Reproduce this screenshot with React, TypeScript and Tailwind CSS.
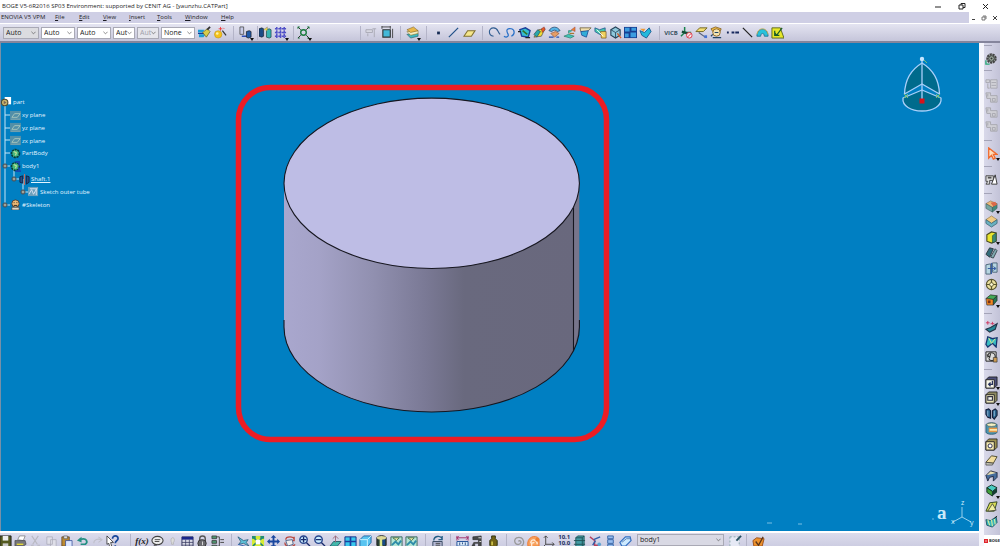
import type { ReactNode } from "react";

const icons: Record<string, ReactNode> = {
  brush: (<><path d="M0 4h7l-2 3H0zM1 9h7l-2 3H1z" fill="#1c9fd8" /><path d="M0 8h8" stroke="#123c9a" strokeWidth="1.3" /><path d="M5 7l5-4 3 3-4 6z" fill="#d8cc4a" stroke="#54511c" strokeWidth=".7" /><path d="M10 4l3-3" stroke="#333" strokeWidth="2" /></>),
  wand: (<><circle cx="4.5" cy="9" r="4" fill="#f4c21c" stroke="#b8860b" strokeWidth=".5" /><circle cx="3.5" cy="8" r="1.4" fill="#fff3a8" /><path d="M9 5l4 5" stroke="#333" strokeWidth="1.3" /><path d="M7 1v4M5 3h4M10 2l1 1" stroke="#e33" strokeWidth=".9" /></>),
  link: (<><path d="M1 1h4v8H1z" fill="#c8cce8" stroke="#444" strokeWidth=".8" /><path d="M3 11h5" stroke="#1d3fb0" strokeWidth="1.5" /><path d="M8 6l3-1 2 1v6l-3 1-2-1z" fill="#205aa8" stroke="#111" strokeWidth=".7" /></>),
  bodies: (<><path d="M0 3l3-1 2 1v8l-2 1-3-1z" fill="#1b4c86" stroke="#111" strokeWidth=".6" /><path d="M8 4l3-1 2 1v8l-2 1-3-1z" fill="#34b4b0" stroke="#163a3a" strokeWidth=".7" /><path d="M5 4l4-3v4" fill="#e8d84a" stroke="#777" strokeWidth=".5" /></>),
  dots: (<path d="M1 3h12M1 7h12M1 11h12M3 1v12M7 1v12M11 1v12" stroke="#5050c8" strokeWidth="1.6" strokeDasharray="3 .6" />),
  snap: (<><circle cx="7" cy="7" r="3" fill="none" stroke="#187a3c" strokeWidth="1.5" /><path d="M1 1l3 3M13 1l-3 3M1 13l3-3M13 13l-3-3" stroke="#222" /><path d="M1 1h2M1 1v2M13 1h-2M13 1v2M1 13h2M13 13h-2" stroke="#187a3c" /></>),
  ghost: (<path d="M1 4h7v3H1zM8 3h4M10 3v9M3 8v3" fill="#d8d8e2" stroke="#aaaab5" />),
  box: (<><path d="M2 4h8v8H2z" fill="#43b8d8" stroke="#333" strokeWidth="1.2" /><path d="M1 1h9M12.500 3v10M1 0v3M10 0v3" stroke="#333" strokeWidth=".9" /></>),
  layers: (<><path d="M1 9l4 4 8-2V8z" fill="#3db7c2" stroke="#255" strokeWidth=".6" /><path d="M1 6l4 4 8-2V5z" fill="#f3eec2" stroke="#877420" strokeWidth=".6" /><path d="M1 4l4 3 8-2-5-4z" fill="#e8b84a" stroke="#7c6020" strokeWidth=".6" /></>),
  point: <rect x="5.500" y="6" width="3" height="3" fill="#172c55" />,
  line: <path d="M2 12L12 2" stroke="#205088" strokeWidth="1.3" />,
  plane: <path d="M1 11l4-6h8l-4 6z" fill="#f5e68a" stroke="#807030" strokeWidth="1.100" />,
  curve: <path d="M6 11C0 10 0 2 6 2c5 0 4 4 7 7" fill="none" stroke="#315d91" strokeWidth="1.200" />,
  spline: <path d="M1 11c3 2 6 0 4-3-2-4 0-6 4-5 4 1 4 6 0 8" fill="none" stroke="#2870c8" strokeWidth="1.300" />,
  surf1: (<><path d="M2 4l6-2 5 3-2 7-7-1z" fill="#35bed0" stroke="#1b3f9a" strokeWidth="1.5" /><path d="M5 5l5 4" stroke="#31752b" strokeWidth="1.8" /><path d="M0 6h3M8 12.500h5" stroke="#222" strokeWidth="1.4" /></>),
  surf2: (<><path d="M1 12l5-8 7-1-4 8z" fill="#f0dc36" stroke="#444" strokeWidth=".7" /><path d="M1 9l4-5 3 2-4 6z" fill="#2aa7a9" stroke="#234" strokeWidth=".6" /><path d="M9 3l3-2 1 3-3 3z" fill="#e85b2a" stroke="#722" strokeWidth=".5" /></>),
  surf3: (<><path d="M1 5c3-5 9-5 12 0l-3 1c-2-2-4-2-6 0z" fill="#57b5e8" stroke="#246" strokeWidth=".8" /><path d="M3 8l4 4 5-4-4-2z" fill="#e59e67" stroke="#953" strokeWidth=".7" /><path d="M1 12h5M9 12h3" stroke="#2450b0" strokeWidth="1.4" /></>),
  surf4: (<><path d="M1 11l5-2 6 2-4 2zM6 8V5h4" fill="#40c7ba" stroke="#338070" strokeWidth=".8" /><path d="M9 4l4-3v5z" fill="#e98131" stroke="#944" strokeWidth=".5" /><path d="M7 8h5" stroke="#aa7630" strokeWidth="1.3" /></>),
  surf5: (<><path d="M1 2h12l-4 4H2z" fill="#f0dfae" stroke="#665633" strokeWidth=".8" /><path d="M2 6l8-1-2 7-5-2z" fill="#32add8" stroke="#1d4f99" strokeWidth=".9" /></>),
  surf6: (<><path d="M1 2l5 2 6-2v8l-6-1-5-3z" fill="#48c8ac" stroke="#265c98" strokeWidth=".9" /><path d="M7 6h6v7H8z" fill="#f2d35f" stroke="#7e5c20" strokeWidth=".8" /><path d="M3 4l7 7" stroke="#fff" /></>),
  cube: (<><path d="M2 4l5-3 5 3v6l-5 3-5-3z" fill="#8fc8dc" stroke="#27445a" strokeWidth="1.200" /><path d="M2 4l5 3 5-3M7 7v6" fill="none" stroke="#27445a" strokeWidth=".9" /><path d="M9 8l4 5" stroke="#d75c28" strokeWidth="1.5" /></>),
  mosaic: (<><rect x="0" y="1" width="14" height="12" fill="#173e91" /><path d="M1 2h5v4H1zM8 2h5v3H8zM1 8h4v4H1zM7 7h6v5H7z" fill="#3c9ce0" /></>),
  patch: (<><path d="M1 5l5 2 5-5 2 4-5 7-5-3z" fill="#24b9db" stroke="#15518c" strokeWidth=".9" /><path d="M1 3h6L5 6z" fill="#ef9a35" /></>),
  tripod: (<><path d="M5 1v6l-4 4M5 7h7" stroke="#18834b" strokeWidth="1.6" fill="none" /><path d="M2 6l6 2" stroke="#144c38" strokeWidth="2.400" /><circle cx="10" cy="10" r="3" fill="#fbe9ed" stroke="#df3544" /><path d="M8 12l4-4" stroke="#df3544" /></>),
  flag: (<><path d="M1 6l4-4h8l-4 4z" fill="#f4df73" stroke="#6d621c" /><path d="M4 7l7 5" stroke="#555f78" strokeWidth="1.2" /><path d="M10 10h3v3h-3z" fill="#4773d4" /></>),
  clock: (<><path d="M1 3l5-2 6 2-1 3H3z" fill="#f1be45" stroke="#77551c" strokeWidth=".8" /><circle cx="7" cy="7" r="4" fill="#f2e4b2" stroke="#906722" /><path d="M1 11l2-2M3 12.500h9M5 7h4" stroke="#246" strokeWidth="1.3" /></>),
  points: <path d="M1 6h2v2H1zM6 6h3v2H6zM10 6h4v2h-4z" fill="#17295e" />,
  backline: <path d="M2 2l10 10" stroke="#222" strokeWidth="1.3" />,
  arc: (<><path d="M1 11c0-10 12-10 12 0H9c0-4-4-4-4 0z" fill="#28c2dc" stroke="#267899" /><path d="M1 9c1-8 11-8 12 0" fill="none" stroke="#d5b947" strokeWidth=".8" /></>),
  sketch: (<><path d="M1 2h9l4 11H1z" fill="#e7e829" stroke="#5b681f" /><path d="M4 7l2 3 6-8M4 5v5h5" fill="none" stroke="#175b27" strokeWidth="1.3" /></>),
  save: (<><path d="M1 1h12v12H1z" fill="#535a20" stroke="#222" /><path d="M4 1h6v5H4z" fill="#eee" /><path d="M4 9h6v4H4z" fill="#ccc" /></>),
  print: (<><path d="M4 5l2-4h6l-2 5z" fill="#fff" stroke="#555" strokeWidth=".6" /><path d="M1 6h11l1 4-3 2H1z" fill="#77777c" stroke="#333" strokeWidth=".6" /><path d="M3 10h7" stroke="#e2d637" strokeWidth="1.5" /></>),
  cut: <path d="M3 1l6 9M10 1L4 10M2 11h3M9 11h3" stroke="#b8b8c1" strokeWidth="1.2" />,
  copy: <path d="M2 2h6v8H2zM6 5h6v8H6z" fill="#dedee8" stroke="#aaaab7" strokeWidth=".8" />,
  paste: (<><path d="M2 2h8v10H2z" fill="#bd8b32" stroke="#553d22" strokeWidth=".8" /><path d="M4 1h4v3H4z" fill="#ddd" stroke="#444" strokeWidth=".6" /><path d="M6 6h7v7H6z" fill="#dce6ff" stroke="#314b9a" strokeWidth=".8" /></>),
  undo: (<><path d="M4 5c8-3 9 3 6 5H5" fill="none" stroke="#249083" strokeWidth="1.8" /><path d="M1 6l5-4v6z" fill="#249083" /></>),
  redo: <path d="M3 9c0-5 5-5 8-4M8 2l4 3-4 3" fill="none" stroke="#c0c0cb" strokeWidth="1.1" />,
  help: (<><path d="M1 1l7 7H5l1 4-2 1-1-4-2 1z" fill="#fff" stroke="#222" strokeWidth=".8" /><path d="M7 4c0-4 6-4 6 0 0 2-3 2-3 5M10 11v2" fill="none" stroke="#19479a" strokeWidth="1.8" /></>),
  bubble: (<><ellipse cx="7" cy="6" rx="6" ry="4.5" fill="#eee" stroke="#444" strokeWidth="1.200" /><path d="M4 5h6M4 7h5M4 10l-1 3 4-3" stroke="#444" fill="none" /></>),
  bulb: <path d="M7 3c3 0 2 4 1 5v2H6V8C5 7 5 3 7 3" fill="#ddd" stroke="#aaa" strokeWidth=".7" />,
  grid: (<><path d="M1 2h12v11H1z" fill="#d7d8e5" stroke="#32345d" /><path d="M1 2h12v3H1z" fill="#1a278a" /><path d="M1 8h12M1 11h12M5 5v8M9 5v8" stroke="#35375f" strokeWidth=".8" /></>),
  lock: (<><path d="M4 7V4c0-4 6-4 6 0v3" fill="none" stroke="#555" strokeWidth="1.5" /><rect x="2" y="5" width="9" height="8" rx="4" fill="#69696e" stroke="#333" /><path d="M7 7v4" stroke="#ddd" /></>),
  tree: (<><path d="M1 1h5v3H1zM1 6h5v3H1zM1 11h5v3H1z" fill="#4e9671" stroke="#333" strokeWidth=".8" /><path d="M6 2h3v10H6M10 5h4M10 8h4" fill="none" stroke="#444" /></>),
  fly: (<><path d="M1 2l6 4 5-1-2 3 3 4-6-3-5 1 2-3z" fill="#5ec1d7" stroke="#285577" strokeWidth=".8" /><path d="M1 10l11 3" stroke="#3162b1" /></>),
  fit: (<><rect x="0" y="1" width="13" height="12" fill="#d7eb35" /><path d="M1 2l4 4M12 2L8 6M1 12l4-4M12 12L8 8" stroke="#19806d" strokeWidth="1.6" /><rect x="4" y="5" width="5" height="5" fill="#fff" /><path d="M0 1h4v3H0zM9 1h4v3H9z" fill="#218d79" /></>),
  pan: (<path d="M7 0l3 3H8v3h3V4l3 3-3 3V8H8v3h2l-3 3-3-3h2V8H3v2L0 7l3-3v2h3V3H4z" fill="#19479f" />),
  rotate: (<><path d="M3 5c0-4 9-4 9 0M12 2v4H8M2 8c0 5 8 6 11 2" fill="none" stroke="#b9483f" strokeWidth="1.4" /><path d="M3 6l7-1 1 5-6 2z" fill="#eee" stroke="#54678b" /></>),
  zoomin: (<><circle cx="6" cy="5" r="4" fill="#c9ecff" stroke="#28458d" strokeWidth="1.5" /><path d="M3 5h6M6 2v6M9 8l4 4" stroke="#182b6d" strokeWidth="1.5" /></>),
  zoomout: (<><circle cx="6" cy="5" r="4" fill="#c9ecff" stroke="#28458d" strokeWidth="1.5" /><path d="M3 5h6M9 8l4 4" stroke="#182b6d" strokeWidth="1.5" /></>),
  normal: (<><path d="M1 12l4-5h8l-4 5z" fill="#42b8ac" stroke="#245f6d" /><path d="M7 8V1l3 3M7 1L4 4" stroke="#9a6a7a" fill="none" /></>),
  views: (<><path d="M1 2h12v11H1z" fill="#38c8ed" stroke="#112b87" /><path d="M7 2v11M1 7h12" stroke="#1840a1" strokeWidth="1.8" /></>),
  iso: (<><path d="M1 5l4-4h8v7l-4 5H1z" fill="#58c4f1" stroke="#2467a4" /><path d="M1 5h8v8M9 5l4-4" stroke="#d1f6ff" fill="none" /></>),
  shade: (<><path d="M2 3c1-3 9-3 10 0v8c-2 3-8 3-10 0z" fill="#283f36" stroke="#222" /><path d="M5 4h3v8H5z" fill="#d8e58a" /><path d="M8 4h3v7H8z" fill="#174a86" /><ellipse cx="7" cy="3" rx="5" ry="2" fill="#ddd899" /></>),
  image: (<><path d="M1 2h12v11H1z" fill="#b3e5d5" stroke="#39665d" /><path d="M2 11l4-4 3 3 3-4" fill="none" stroke="#2d8ca9" strokeWidth="2" /><path d="M3 3h7l-3 3z" fill="#f0efaa" stroke="#4a7251" /></>),
  update: (<><path d="M2 7h10v6H2z" fill="#b5b9d4" stroke="#34465e" /><path d="M3 6c0-5 7-6 9-2M12 1v4H8" stroke="#235e86" fill="none" strokeWidth="1.4" /><path d="M5 9h5M5 11h5" stroke="#444" /></>),
  measure: (<><path d="M1 3h12M1 1v5M13 1v5M3 1L1 3l2 2M11 1l2 2-2 2" stroke="#a02c68" fill="none" /><path d="M1 7h12v5H1z" fill="#d7e8f8" stroke="#1c4d96" /><path d="M4 8v3M7 8v2M10 8v3" stroke="#2d4f88" /></>),
  caliper: (<><path d="M2 2l9-1v12H8V9H4v3H1l2-4h5V5H2z" fill="#47494b" stroke="#222" strokeWidth=".6" /><path d="M8 3h3M9 7h2" stroke="#e1e1dc" /></>),
  weight: (<><path d="M5 1h4v3l2 2v5l-2 3H5l-2-3V6l2-2z" fill="#736315" stroke="#292f10" /><path d="M5.500 7v4" stroke="#d0c54a" strokeWidth="1.8" /></>),
  spiral: <path d="M7 7c1-2 4 0 2 2-4 4-9-3-4-6C13 0 16 12 7 13" stroke="#999" fill="none" strokeWidth="1.4" />,
  orange: (<><path d="M1 12C-1 2 9-1 13 4v8H1" fill="#f8a15d" stroke="#ed7930" /><path d="M4 9c0-6 7-4 7 1M5 13V9l3-1" stroke="#ffe9d4" strokeWidth="1.5" fill="none" /><circle cx="11" cy="5" r="2" fill="#ed8032" /></>),
  axis: <path d="M4 1v9h9M4 10l-3 3M2 3l2-2 2 2M11 8l2 2-2 2" stroke="#444" fill="none" />,
  cyl: (<><path d="M3 3l2-2h7v10l-2 2H3z" fill="#439da5" stroke="#265c61" /><path d="M3 3h7v10M10 3l2-2M1 6h12M1 10h12" fill="none" stroke="#205258" /></>),
  relation: (<><path d="M1 2l5 4v5h6" stroke="#b7415e" strokeWidth="1.5" fill="none" /><path d="M5 5l7-3M4 11l3-5" stroke="#315ea9" strokeWidth="1.5" /><circle cx="11" cy="10" r="2" fill="#5da5d5" /></>),
  stack: <path d="M4 1h6v3H4zM4 5h6v4H4zM4 10h6v3H4z" fill="#96bdf0" stroke="#3565a8" />,
  eraser: (<><path d="M1 8l6-6h5l1 4-6 6H3z" fill="#cdeaff" stroke="#346fc1" strokeWidth="1.3" /><path d="M3 8l5-4h4" stroke="#5a7fb2" fill="none" /></>),
  edit: (<><path d="M1 2h10v11H1z" fill="#e6e9f5" stroke="#8aa" strokeDasharray="2 2" /><path d="M8 6l5-5" stroke="#244d5e" strokeWidth="2" /></>),
  feature: (<><path d="M1 6l4-3 8 1-2 8H2z" fill="#ed922e" stroke="#9b4e1a" /><path d="M4 7l3 4 5-9" fill="none" stroke="#5b3519" strokeWidth="1.4" /></>),
  gear: (<><circle cx="7" cy="7" r="4.5" fill="#aeb9b3" stroke="#444" strokeWidth="2.200" strokeDasharray="2.4 .7" /><circle cx="7" cy="7" r="3" fill="#9cab9f" stroke="#333" /><circle cx="7" cy="7" r="1.1" fill="#333" /><path d="M1 9v4h4" stroke="#2da879" fill="none" strokeWidth="1.5" /></>),
  fadeA: <path d="M1 3h4v3H1zM6 3h7v9H6zM7 6h5M7 9h5M3 7v5h2" fill="#d2d2d8" stroke="#a8a8b0" />,
  fadeB: <path d="M1 2h5v3h7v7H6V8H2zM8 8h3v3H8zM3 3v3" fill="#d0d0d6" stroke="#a6a6ae" />,
  cursor: <path d="M4 1v11l3-3 2 4 2-1-2-4h4z" fill="#ffe0bd" stroke="#f06a2e" strokeWidth="1.4" />,
  part: (<><path d="M1 3h8v5H5v4H1l2-3H1z" fill="#ddd" stroke="#444" /><path d="M7 12l4-10 2 10z" fill="#fff" stroke="#333" /><path d="M3 5h4" stroke="#555" strokeWidth="2" /></>),
  pad: (<><path d="M1 4l5-3 7 3-5 4z" fill="#ecba79" stroke="#87643b" strokeWidth=".6" /><path d="M1 4l7 4v5l-7-4z" fill="#75a5a2" stroke="#355855" strokeWidth=".6" /><path d="M8 8l5-4v5l-5 4z" fill="#438a7d" stroke="#355855" strokeWidth=".6" /><path d="M6 3l5-1 2 3-4 2z" fill="#dc6949" /></>),
  pocket: (<><path d="M1 5l6-4 6 4-6 4z" fill="#f0c983" stroke="#a18349" strokeWidth=".8" /><path d="M1 5l6 4 6-4v4l-6 4-6-4z" fill="#6ab1c1" stroke="#345f6e" strokeWidth=".8" /></>),
  draft: (<><path d="M2 4l5-3 5 1v9l-5 2-5-2z" fill="#e9e52f" stroke="#4a4b20" strokeWidth="1.200" /><path d="M8 5l4-3v9l-4 2z" fill="#3a8774" stroke="#243" strokeWidth=".6" /></>),
  rib: (<><path d="M1 9l4-7 4 1-4 9z" fill="#336c7b" stroke="#303b42" /><path d="M6 12l5-9 2 2-4 8z" fill="#81a9b0" stroke="#384850" /></>),
  mirror: (<><path d="M1 3l5-1v11H1zM8 1h5v10H8z" fill="#b6d5e1" stroke="#4c6578" /><path d="M3 7h8M7 1v12M9 5l3 2-3 2" stroke="#2f56a0" fill="none" /></>),
  target: (<><circle cx="7" cy="7" r="5.5" fill="#eadf9c" stroke="#5a552d" strokeWidth="1.200" /><path d="M7 1v12M1 7h12" stroke="#5a552d" strokeWidth="1.3" /><circle cx="7" cy="7" r="2" fill="#fffbd7" stroke="#5a552d" /></>),
  combo: (<><path d="M1 6l5-4 7 1-4 4z" fill="#43a957" stroke="#222" strokeWidth=".7" /><path d="M1 6l8 1v6H2z" fill="#f28721" stroke="#333" strokeWidth=".7" /><path d="M9 7l4-4v5l-4 5z" fill="#267651" stroke="#222" strokeWidth=".7" /><path d="M3 8h3v3H3z" fill="#763418" /></>),
  shell: (<><path d="M1 10l5-2 7-4-2 6-6 3z" fill="#268897" stroke="#223447" strokeWidth="1.200" /><path d="M3 1v4M1 3h4M8 2v3M6 4h4" stroke="#ce365e" /></>),
  mesh: (<><path d="M1 10l2-8 5 2 5-1-1 10-4-4-5 4z" fill="#39bbc1" stroke="#163771" strokeWidth="1.4" /><path d="M4 3l3 6 4-5" stroke="#d8e88a" fill="none" /></>),
  loop: (<><path d="M1 2h11v10H1z" fill="#ddd" stroke="#222" /><path d="M3 8c-1-7 8-6 8-1 0 6-6 5-7 2M2 5l3 3 1-4" fill="none" stroke="#333" strokeWidth="1.2" /><path d="M9 8h4v5H9z" fill="#cc9b53" stroke="#333" strokeWidth=".7" /></>),
  frame: (<><path d="M1 4l3-3h9v9l-3 3H1z" fill="#4d4f7a" stroke="#111" strokeWidth=".8" /><path d="M1 4h9v9H1z" fill="#f6f4e5" stroke="#222" /><path d="M8 5v4H4M6 7L4 9l2 2" fill="none" stroke="#29335c" strokeWidth="1.4" /></>),
  frameY: (<><path d="M1 4l3-3h9v9l-3 3H1z" fill="#9c9150" stroke="#111" strokeWidth=".8" /><path d="M1 4h9v9H1z" fill="#f4e9b0" stroke="#222" /><circle cx="5.5" cy="8.5" r="2.2" fill="#fff" stroke="#224" /></>),
  loopFrame: (<><path d="M1 4l3-3h9v9l-3 3H1z" fill="#8d8860" stroke="#111" strokeWidth=".8" /><path d="M1 4h9v9H1z" fill="#e8e3b8" stroke="#222" /><path d="M3 6h5v4H3z" fill="#f8f8ee" stroke="#334" strokeWidth="1.2" /></>),
  split: (<><path d="M1 3l3-1 2 2v8l-3-1-2-3zM8 4l3-2 2 2v5l-3 4-2-2z" fill="#28618c" stroke="#171f3b" strokeWidth="1.200" /><path d="M3 4v6M10 4v6" stroke="#92bad8" /></>),
  ring: (<><path d="M1 3c1-3 11-3 12 0v8c-1 3-11 3-12 0z" fill="#4b93af" stroke="#265368" strokeWidth=".8" /><ellipse cx="7" cy="3" rx="5" ry="1.8" fill="#f3f0c2" stroke="#576355" strokeWidth=".7" /><path d="M4 6h9v5H4z" fill="#e39542" /><path d="M5 8.500h8" stroke="#fff5bf" strokeWidth="1.6" /></>),
  wedge: (<><path d="M1 10l6-7 6 1-4 7z" fill="#f1dc9c" stroke="#4c482d" /><path d="M1 10l8 1-1 2H1z" fill="#c3c3b6" stroke="#333" strokeWidth=".7" /></>),
  chamfer: (<><path d="M1 7l5-5 7 2-4 4z" fill="#e9e0b2" stroke="#262c43" /><path d="M1 7l2 6 2-4 4-1v5l4-4V4" fill="#456c9c" stroke="#222b43" /></>),
  green: (<><path d="M2 4l5-3 6 3-5 4z" fill="#49cbc0" stroke="#122f26" /><path d="M2 4l6 4v5l-6-4z" fill="#40a03b" stroke="#123021" /><path d="M8 8l5-4v5l-5 4z" fill="#143c33" /></>),
  fold: (<><path d="M1 12l4-9 8-1-3 10z" fill="#d9dd57" stroke="#304222" /><path d="M3 12l5-8 4 7z" fill="#f1f0a0" stroke="#333" strokeWidth=".8" /></>),
  knit: (<><path d="M1 5l5 1 6-4 1 6-5 5-6-2z" fill="#37b5bb" stroke="#245766" /><path d="M3 5l2 6M7 5l1 7M10 4l1 6" stroke="#d5eba0" strokeWidth="1.2" /><path d="M10 4l3-3" stroke="#222" /></>),
};
icons.fadeC = icons.fadeB;
icons.fadeD = icons.fadeB;
icons.imageB = icons.image;

function Glyph({ name }: { name: string }) {
  return <svg viewBox="0 0 14 14" className="size-[13px] shrink-0" aria-hidden="true">{icons[name]}</svg>;
}

function Tool({ name, menu = false }: { name: string; menu?: boolean }) {
  let face: ReactNode = <Glyph name={name} />;
  if (name === "fx") face = <span className="font-['Liberation_Serif',serif] text-[9px] leading-3 font-bold italic">f(x)</span>;
  if (name === "vicb") face = <span className="text-[6px] leading-3 font-bold text-[#36505f]">VICB</span>;
  if (name === "tolerance") face = <span className="self-start text-[6px] leading-[6px] font-bold text-[#1d315e]">10.1<br />10.0</span>;
  return (
    <button type="button" aria-label={name} className="relative flex size-[14px] shrink-0 items-center justify-center">
      {face}
      {menu && <svg viewBox="0 0 4 3" className="absolute -right-[2px] -bottom-px h-[3px] w-1" aria-hidden="true"><path d="M0 0h4L2 3z" fill="#111" /></svg>}
    </button>
  );
}

const dropdownTools = ["link", "dots", "snap", "layers", "cursor", "pad", "draft", "combo", "frame", "loopFrame", "green"];

function Group({ names, className }: { names: string[]; className: string }) {
  return (
    <div className={"flex shrink-0 items-center justify-between border-l border-[#b4b4c8] " + className}>
      {names.map((n) => <Tool key={n} name={n} menu={dropdownTools.includes(n)} />)}
    </div>
  );
}

function Combo({ label, value, className, disabled = false }: { label: string; value: string; className: string; disabled?: boolean }) {
  return (
    <div className={"relative h-3 shrink-0 border border-[#a9a9b5] " + className}>
      <select aria-label={label} disabled={disabled} className="block h-full w-full appearance-none overflow-hidden pr-[7px] pl-[2px] text-[7px] leading-[10px] outline-none">
        <option>{value}</option>
      </select>
      <svg viewBox="0 0 6 4" className="pointer-events-none absolute top-[3px] right-[2px] h-1 w-[5px]" aria-hidden="true"><path d="M.5.5L3 3 5.500.5" fill="none" stroke="#555" strokeWidth=".8" /></svg>
    </div>
  );
}

const sideGroups: { names: string[]; className: string }[] = [
  { names: ["gear"], className: "h-[25px]" },
  { names: ["fadeA", "fadeB", "fadeC", "fadeD"], className: "h-[70px]" },
  { names: ["cursor"], className: "h-[26px]" },
  { names: ["part"], className: "h-[27px]" },
  { names: ["pad", "pocket", "draft", "rib", "mirror", "target", "combo"], className: "h-[120px]" },
  { names: ["shell", "mesh", "loop"], className: "h-[56px]" },
  { names: ["frame", "loopFrame", "split", "ring", "frameY", "wedge", "chamfer", "green", "fold", "knit"], className: "h-[166px]" },
];

const planeIcon = (<><path d="M0 1h12v10H0z" fill="#528fa8" /><path d="M2 8l3-4h6L8 8z" fill="none" stroke="#a9c7bd" /><path d="M1 10h10" stroke="#87abb0" /></>);
const bodyIcon = (<><circle cx="6" cy="6" r="4" fill="#55c883" stroke="#093f39" strokeWidth="2.4" strokeDasharray="2.2 .7" /><circle cx="6" cy="6" r="3.3" fill="#49b87d" /><path d="M4 4l3 1-1 3" fill="none" stroke="#e6f1a0" /></>);

const nodes: { label: string; indent: string; icon: ReactNode; underline?: boolean }[] = [
  { label: "part", indent: "pl-px", icon: (<><path d="M4 0h7v8H4z" fill="#fff" /><circle cx="4" cy="6" r="3.5" fill="#c8b56c" stroke="#4c482f" strokeWidth="1.2" /><path d="M3 4l3 2-3 2z" fill="#765" /></>) },
  { label: "xy plane", indent: "pl-[10px]", icon: planeIcon },
  { label: "yz plane", indent: "pl-[10px]", icon: planeIcon },
  { label: "zx plane", indent: "pl-[10px]", icon: planeIcon },
  { label: "PartBody", indent: "pl-[10px]", icon: bodyIcon },
  { label: "body1", indent: "pl-[10px]", icon: (<>{bodyIcon}<path d="M6 1h4v4M9 7l2 4H6" stroke="#1748b3" strokeWidth="1.8" fill="none" /></>) },
  { label: "Shaft.1", indent: "pl-[19px]", underline: true, icon: (<><path d="M1 3l3-1v8l-3-1zM8 2l3 1v6l-3 2z" fill="#244d86" stroke="#132244" /><path d="M6 0v12" stroke="#c66b60" strokeWidth="1.2" /></>) },
  { label: "Sketch outer tube", indent: "pl-[28px]", icon: (<><path d="M0 1h11v10H0z" fill="#6ca0bc" /><path d="M1 9l3-5 2 5 4-7M2 3h7v7" fill="none" stroke="#d9e3f2" /></>) },
  { label: "#Skeleton", indent: "pl-[10px]", icon: (<><circle cx="6" cy="5" r="4" fill="#f0bd77" stroke="#533d32" /><path d="M2 9h8v3H2z" fill="#dfd9c8" stroke="#333" strokeWidth=".7" /><path d="M4 4h1M7 4h1M4 7h4" stroke="#222" /></>) },
];

function Tree() {
  return (
    <nav aria-label="Specification tree" className="absolute top-[53px] -left-px">
      <svg viewBox="0 0 32 115" className="absolute top-0 left-0 h-[115px] w-8" aria-hidden="true">
        <path d="M5 6v103M5 19h5M5 32h5M5 44h5M5 57h5M5 70h5M5 109h5M14 70v13h5M23 83v13h5" fill="none" stroke="#c6e6f5" />
        {[[5, 70], [14, 83], [23, 96], [5, 109]].map(([x, y]) => (
          <g key={x + "-" + y}><circle cx={x} cy={y} r="2.200" fill="#6c7476" stroke="#414b51" strokeWidth=".7" /><path d={`M${x - 1} ${y}h2`} stroke="#d8d0b7" /></g>
        ))}
      </svg>
      <ul className="relative grid h-[115px] auto-rows-fr">
        {nodes.map((n) => (
          <li key={n.label} className={"flex items-center gap-px " + n.indent}>
            <svg viewBox="0 0 12 12" className="size-[11px] shrink-0" aria-hidden="true">{n.icon}</svg>
            <a href="#" className={"text-[6px] leading-3 whitespace-nowrap text-[#e2f4ff] " + (n.underline ? "underline" : "")}>{n.label}</a>
          </li>
        ))}
      </ul>
    </nav>
  );
}

function Model() {
  return (
    <svg viewBox="1 43 978 488" className="block h-full w-full" role="img" aria-label="Cylinder">
      <defs>
        <linearGradient id="side">
          <stop offset="0" stopColor="#a9a7ce" /><stop offset=".12" stopColor="#a4a2c7" /><stop offset=".3" stopColor="#9190b0" />
          <stop offset=".48" stopColor="#7a7995" /><stop offset=".61" stopColor="#69697e" /><stop offset="1" stopColor="#69687d" />
        </linearGradient>
      </defs>
      <rect x="238.500" y="87.500" width="368" height="352" rx="32" fill="none" stroke="#ed1c24" strokeWidth="5.500" />
      <path d="M284 183v144a147.700 85 0 0 0 295.400 0V183z" fill="url(#side)" />
      <path d="M573.500 208L579 190v138l-5.500 24z" fill="#77758b" />
      <path d="M284 320v7a147.700 85 0 0 0 295.400 0v-7M573.500 207v144" fill="none" stroke="#16161f" strokeWidth="1.100" />
      <ellipse cx="431.700" cy="183.300" rx="147.700" ry="85.200" fill="#bebde5" stroke="#16161f" strokeWidth="1.100" />
      <path d="M767 523h5M798 524h4" stroke="#79bfe2" />
    </svg>
  );
}

function Compass() {
  return (
    <svg viewBox="0 0 42 58" className="absolute top-[12px] right-[36px] h-[58px] w-[42px]" aria-label="Compass" role="img">
      <g fill="#006b8c" stroke="#a9d0fa" strokeWidth="1.300" strokeLinejoin="round">
        <path d="M21 8C11 14 4 24 3.500 39L21 29l17.500 10C38 24 31 14 21 8z" />
        <path d="M2 43l19-8 19 8c1 8-8 13-19 13S1 51 2 43z" />
        <path d="M21 4v40" fill="none" />
      </g>
      <circle cx="21" cy="4" r="2.200" fill="#c4e5ff" />
      <path d="M3 39l4 4M7 39l-4 4M35 39l4 4M39 39l-4 4M23 5l3 3" stroke="#84c86d" strokeWidth=".9" />
      <path d="M18.500 43.500h5v5h-5z" fill="#d8121b" />
    </svg>
  );
}

export default function App() {
  return (
    <div className="flex h-screen flex-col overflow-hidden bg-[#cfcfe5] font-['Open_Sans','Noto_Sans',sans-serif] text-[#1c1c24]">
      <header className="flex h-3 shrink-0 items-center justify-between bg-white pl-[2px] text-[6px] leading-3">
        <h1 className="whitespace-nowrap">BOGE V5-6R2016 SP03 Environment: supported by CENIT AG - [yaunzhu.CATPart]</h1>
        <div className="flex gap-[15px] pr-[10px]">
          <button type="button" aria-label="Minimize"><svg viewBox="0 0 9 9" className="size-[9px]"><path d="M2 5h6" stroke="#222" /></svg></button>
          <button type="button" aria-label="Restore"><svg viewBox="0 0 9 9" className="size-[9px]"><path d="M2 3h4v4H2zM4 3V1.500h4v4H6" fill="none" stroke="#222" /></svg></button>
          <button type="button" aria-label="Close"><svg viewBox="0 0 9 9" className="size-[9px]"><path d="M2 2l5 5M7 2L2 7" stroke="#222" /></svg></button>
        </div>
      </header>
      <div className="flex h-[11px] shrink-0 items-center justify-between pl-px text-[6px] leading-[11px]">
        <nav aria-label="Menu" className="flex whitespace-nowrap">
          <button type="button" className="w-[54px] text-left">ENOVIA V5 VPM</button>
          <button type="button" className="w-6 text-left"><u>F</u>ile</button>
          <button type="button" className="w-6 text-left"><u>E</u>dit</button>
          <button type="button" className="w-[26px] text-left"><u>V</u>iew</button>
          <button type="button" className="w-7 text-left"><u>I</u>nsert</button>
          <button type="button" className="w-7 text-left"><u>T</u>ools</button>
          <button type="button" className="w-9 text-left"><u>W</u>indow</button>
          <button type="button" className="text-left"><u>H</u>elp</button>
        </nav>
        <div className="flex h-full w-[31px] items-center justify-around bg-white">
          <button type="button" aria-label="Minimize document"><svg viewBox="0 0 6 6" className="size-[6px]"><path d="M1 4.500h3" stroke="#444" /></svg></button>
          <button type="button" aria-label="Restore document"><svg viewBox="0 0 6 6" className="size-[6px]"><path d="M1 2h3v3H1zM2 1h3v3" fill="none" stroke="#555" strokeWidth=".8" /></svg></button>
          <button type="button" aria-label="Close document"><svg viewBox="0 0 6 6" className="size-[6px]"><path d="M1 1l4 4M5 1L1 5" stroke="#444" /></svg></button>
        </div>
      </div>
      <div className="flex h-5 shrink-0 items-center gap-[2px] border-t border-b-2 border-t-white border-b-[#85859c] bg-linear-to-b from-[#e4e4f1] to-[#c5c5da] pl-[3px]">
        <Combo label="Fill colour" value="Auto" className="w-9 bg-[#dcdce0]" />
        <Combo label="Line colour" value="Auto" className="w-[34px] bg-white" />
        <Combo label="Line type" value="Auto" className="w-[34px] bg-white" />
        <Combo label="Line weight" value="Auto" className="w-[22px] bg-white" />
        <Combo label="Point symbol" value="Auto" disabled className="w-[22px] bg-[#e6e6ec] text-[#a0a0aa]" />
        <Combo label="Layer" value="None" className="w-[34px] bg-white" />
        <div className="flex w-[34px] shrink-0 justify-between pr-1"><Tool name="brush" /><Tool name="wand" /></div>
        <Group names={["link"]} className="w-[22px] pl-1" />
        <Group names={["bodies", "dots"]} className="w-[34px] pr-1" />
        <Group names={["snap"]} className="mr-[43px] w-[22px] pl-[2px]" />
        <Group names={["ghost", "box"]} className="w-[38px] pr-[4px] pl-[3px]" />
        <Group names={["layers"]} className="w-6 pl-1" />
        <Group names={["point", "line", "plane"]} className="w-[54px] pr-1 pl-1" />
        <Group names={["curve", "spline", "surf1", "surf2", "surf3", "surf4", "surf5", "surf6", "cube", "mosaic", "patch"]} className="w-[175px] pr-1 pl-1" />
        <Group names={["vicb", "tripod", "flag", "clock", "points", "backline", "arc", "sketch"]} className="w-[126px] pl-1" />
      </div>
      <div className="flex min-h-0 flex-1">
        <div className="flex min-w-0 flex-1 flex-col">
          <main className="relative min-h-0 flex-1 overflow-hidden border-l border-[#7790a8] bg-[#007fc2]">
            <Model />
            <Tree />
            <Compass />
            <svg viewBox="0 0 50 30" className="absolute right-[2px] bottom-[2px] h-[30px] w-[50px]" aria-label="Axis system" role="img">
              <path d="M35 8v10l-9 5M35 18l9 5" fill="none" stroke="#a8daf2" strokeWidth=".9" />
              <g fill="#d5eefc" fontFamily="Open Sans, sans-serif" fontSize="7"><text x="34" y="6">z</text><text x="24" y="25">x</text><text x="43" y="26">y</text></g>
              <text x="10" y="20" fill="#c9e9f8" fontFamily="Liberation Serif, serif" fontSize="19" fontWeight="bold">a</text>
              <path d="M5 20h2" stroke="#67bce1" />
            </svg>
          </main>
          <footer className="flex h-[15px] shrink-0 items-start gap-1 overflow-hidden border-t-2 border-white bg-linear-to-b from-[#dcdcec] to-[#cdcde2] pt-px">
            <div className="-ml-[2px] flex w-[122px] shrink-0 justify-between">
              {["save", "print", "cut", "copy", "paste", "undo", "redo", "help"].map((n) => <Tool key={n} name={n} />)}
            </div>
            <Group names={["fx", "bubble", "bulb", "grid", "lock", "tree"]} className="ml-[6px] w-[94px] pl-1" />
            <Group names={["fly", "fit", "pan", "rotate", "zoomin", "zoomout", "normal", "views", "iso", "shade", "image", "imageB"]} className="ml-[3px] w-[188px] pl-1" />
            <Group names={["update"]} className="ml-[2px] w-[19px] pl-1" />
            <Group names={["measure", "caliper", "weight"]} className="ml-[2px] w-[50px] pl-1" />
            <Group names={["spiral", "orange", "axis", "tolerance", "cyl", "relation", "stack", "eraser"]} className="ml-[2px] w-[127px] pl-1" />
            <Combo label="In work object" value="body1" className="w-[87px] bg-[#d9d9e4]" />
            <Tool name="edit" />
            <Group names={["feature"]} className="w-5 pl-1" />
          </footer>
        </div>
        <aside aria-label="Part design" className="flex w-[21px] shrink-0 flex-col border-l-[5px] border-[#f6f6fc] bg-linear-to-r from-[#d9d9ea] to-[#c3c3d8] pt-[2px]">
          {sideGroups.map((g) => (
            <div key={g.names[0]} className={"flex shrink-0 flex-col " + g.className}>
              <span className="h-px w-2 shrink-0 bg-[#a4a4b8]" />
              <div className="flex flex-1 flex-col items-start justify-between pt-[5px] pb-[6px]">
                {g.names.map((n) => <Tool key={n} name={n} menu={dropdownTools.includes(n)} />)}
              </div>
            </div>
          ))}
          <div className="flex min-h-0 flex-1 items-center gap-px bg-white text-[4px] leading-[8px] font-bold">
            <svg viewBox="0 0 4 4" className="size-1 shrink-0" aria-hidden="true"><path d="M0 0h4v4H0z" fill="#e0242c" /><path d="M1 2h2" stroke="#fff" strokeWidth=".7" /></svg>
            BOGE
          </div>
        </aside>
      </div>
    </div>
  );
}
